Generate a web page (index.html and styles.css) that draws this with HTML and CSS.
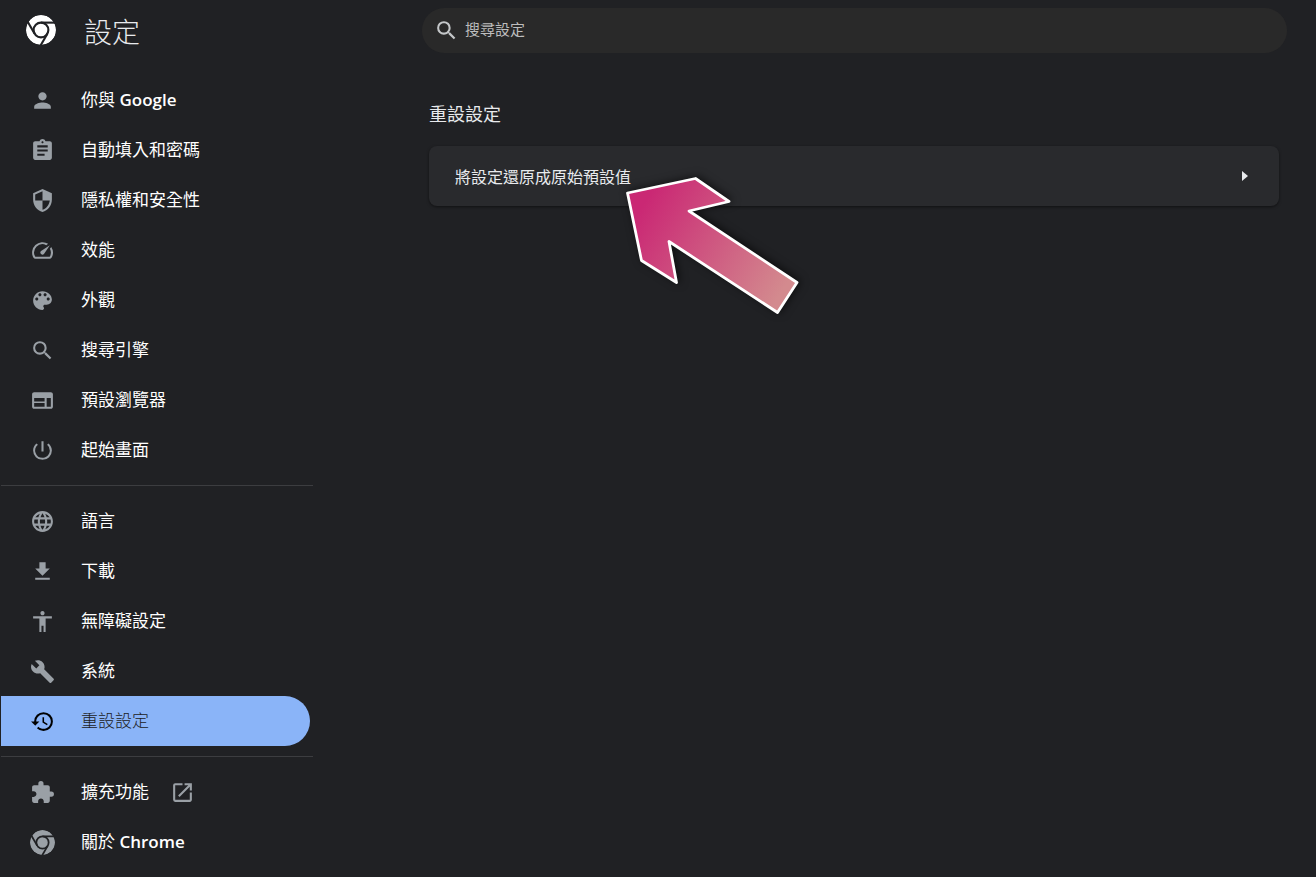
FILE: index.html
```
<!DOCTYPE html>
<html lang="zh-Hant">
<head>
  <meta charset="UTF-8">
  <meta name="viewport" content="width=device-width, initial-scale=1">
  <title>設定</title>
  <link rel="stylesheet" href="styles.css">
</head>
<body>
  <svg class="sprite" aria-hidden="true">
    <symbol id="chrome" viewBox="0 0 24 24">
      <mask id="chrome-cut">
        <circle cx="12" cy="12" r="12" fill="#fff"/>
        <g fill="none" stroke="#000" stroke-width="1.7">
          <circle cx="12" cy="12" r="5.9"/>
          <path d="M12 6.1H24"/>
          <path d="M12 6.1H24" transform="rotate(120 12 12)"/>
          <path d="M12 6.1H24" transform="rotate(240 12 12)"/>
        </g>
      </mask>
      <circle cx="12" cy="12" r="12" fill="currentColor" mask="url(#chrome-cut)"/>
    </symbol>
    <symbol id="search" viewBox="0 0 24 24">
      <path d="M15.5 14h-.79l-.28-.27A6.471 6.471 0 0 0 16 9.5 6.5 6.5 0 1 0 9.5 16c1.61 0 3.09-.59 4.23-1.57l.27.28v.79l5 4.99L20.49 19l-4.99-5zm-6 0C7.01 14 5 11.99 5 9.5S7.01 5 9.5 5 14 7.01 14 9.5 11.99 14 9.5 14z"/>
    </symbol>
  </svg>

  <aside class="sidebar">
    <header class="brand">
      <svg class="logo"><use href="#chrome"/></svg>
      <h1>設定</h1>
    </header>
    <nav>
      <div class="menu">
        <a href="#people">
          <svg class="icon" viewBox="0 0 24 24"><path d="M12 12c2.21 0 4-1.79 4-4s-1.79-4-4-4-4 1.79-4 4 1.79 4 4 4zm0 2c-2.67 0-8 1.34-8 4v2h16v-2c0-2.66-5.33-4-8-4z"/></svg>
          <span>你與 <b>Google</b></span>
        </a>
        <a href="#autofill">
          <svg class="icon" viewBox="0 0 24 24"><path d="M19 3h-4.18C14.4 1.84 13.3 1 12 1c-1.3 0-2.4.84-2.82 2H5c-1.1 0-2 .9-2 2v14c0 1.1.9 2 2 2h14c1.1 0 2-.9 2-2V5c0-1.1-.9-2-2-2zm-7 0c.55 0 1 .45 1 1s-.45 1-1 1-1-.45-1-1 .45-1 1-1zm2 14H7v-2h7v2zm3-4H7v-2h10v2zm0-4H7V7h10v2z"/></svg>
          <span>自動填入和密碼</span>
        </a>
        <a href="#privacy">
          <svg class="icon" viewBox="0 0 24 24"><path d="M12 1L3 5v6c0 5.55 3.84 10.74 9 12 5.16-1.26 9-6.45 9-12V5l-9-4zm0 10.99h7c-.53 4.12-3.28 7.79-7 8.94V12H5V6.3l7-3.11v8.8z"/></svg>
          <span>隱私權和安全性</span>
        </a>
        <a href="#performance">
          <svg class="icon" viewBox="0 0 24 24"><path d="M20.38 8.57l-1.23 1.85a8 8 0 0 1-.22 7.58H5.07A8 8 0 0 1 15.58 6.85l1.85-1.23A10 10 0 0 0 3.35 19a2 2 0 0 0 1.72 1h13.85a2 2 0 0 0 1.74-1 10 10 0 0 0-.27-10.44zm-9.79 6.84a2 2 0 0 0 2.83 0l5.66-8.49-8.49 5.66a2 2 0 0 0 0 2.83z"/></svg>
          <span>效能</span>
        </a>
        <a href="#appearance">
          <svg class="icon" viewBox="0 0 24 24"><path d="M12 3c-4.97 0-9 4.03-9 9s4.03 9 9 9c.83 0 1.5-.67 1.5-1.5 0-.39-.15-.74-.39-1.01-.23-.26-.38-.61-.38-.99 0-.83.67-1.5 1.5-1.5H16c2.76 0 5-2.24 5-5 0-4.42-4.03-8-9-8zm-5.5 9c-.83 0-1.5-.67-1.5-1.5S5.67 9 6.5 9 8 9.67 8 10.5 7.33 12 6.5 12zm3-4C8.67 8 8 7.33 8 6.5S8.67 5 9.5 5s1.5.67 1.5 1.5S10.33 8 9.5 8zm5 0c-.83 0-1.5-.67-1.5-1.5S13.67 5 14.5 5s1.5.67 1.5 1.5S15.33 8 14.5 8zm3 4c-.83 0-1.5-.67-1.5-1.5S16.67 9 17.5 9s1.5.67 1.5 1.5-.67 1.5-1.5 1.5z"/></svg>
          <span>外觀</span>
        </a>
        <a href="#engine">
          <svg class="icon"><use href="#search"/></svg>
          <span>搜尋引擎</span>
        </a>
        <a href="#default-browser">
          <svg class="icon" viewBox="0 0 24 24"><path d="M20 4H4c-1.1 0-1.99.9-1.99 2L2 18c0 1.1.9 2 2 2h16c1.1 0 2-.9 2-2V6c0-1.1-.9-2-2-2zm-6 14H4v-3.500h10v3.500zm0-5H4V9.500h10V13zm6 5h-4V9.500h4V18z"/></svg>
          <span>預設瀏覽器</span>
        </a>
        <a href="#startup">
          <svg class="icon" viewBox="0 0 24 24"><path d="M13 3h-2v10h2V3zm4.83 2.17l-1.42 1.42A6.92 6.92 0 0 1 19 12c0 3.87-3.13 7-7 7A6.995 6.995 0 0 1 7.58 6.58L6.17 5.17A8.932 8.932 0 0 0 3 12a9 9 0 0 0 18 0c0-2.74-1.23-5.18-3.17-6.83z"/></svg>
          <span>起始畫面</span>
        </a>
      </div>
      <div class="menu">
        <a href="#languages">
          <svg class="icon" viewBox="0 0 24 24"><path d="M11.99 2C6.47 2 2 6.48 2 12s4.47 10 9.99 10C17.52 22 22 17.52 22 12S17.52 2 11.99 2zm6.93 6h-2.95a15.65 15.65 0 0 0-1.38-3.56A8.03 8.03 0 0 1 18.92 8zM12 4.04c.83 1.2 1.48 2.53 1.91 3.96h-3.82c.43-1.43 1.08-2.76 1.91-3.96zM4.26 14C4.1 13.36 4 12.69 4 12s.1-1.36.26-2h3.38c-.08.66-.14 1.32-.14 2s.06 1.34.14 2H4.26zm.82 2h2.95c.32 1.25.78 2.45 1.38 3.56A7.987 7.987 0 0 1 5.08 16zm2.95-8H5.08a7.987 7.987 0 0 1 4.33-3.56A15.65 15.65 0 0 0 8.03 8zM12 19.96c-.83-1.2-1.48-2.53-1.91-3.96h3.82c-.43 1.43-1.08 2.76-1.91 3.96zM14.34 14H9.66c-.09-.66-.16-1.32-.16-2s.07-1.35.16-2h4.68c.09.65.16 1.32.16 2s-.07 1.34-.16 2zm.25 5.56c.6-1.11 1.06-2.31 1.38-3.56h2.95a8.03 8.03 0 0 1-4.33 3.56zM16.36 14c.08-.66.14-1.32.14-2s-.06-1.34-.14-2h3.38c.16.64.26 1.31.26 2s-.1 1.36-.26 2h-3.38z"/></svg>
          <span>語言</span>
        </a>
        <a href="#downloads">
          <svg class="icon" viewBox="0 0 24 24"><path d="M19 9h-4V3H9v6H5l7 7 7-7zM5 18v2h14v-2H5z"/></svg>
          <span>下載</span>
        </a>
        <a href="#accessibility">
          <svg class="icon" viewBox="0 0 24 24"><path d="M12 2c1.1 0 2 .9 2 2s-.9 2-2 2-2-.9-2-2 .9-2 2-2zm9 7h-6v13h-2v-6h-2v6H9V9H3V7h18v2z"/></svg>
          <span>無障礙設定</span>
        </a>
        <a href="#system">
          <svg class="icon" viewBox="0 0 24 24"><path d="M22.7 19l-9.1-9.1c.9-2.3.4-5-1.5-6.9-2-2-5-2.4-7.4-1.3L9 6 6 9 1.6 4.7C.4 7.1.9 10.1 2.9 12.1c1.9 1.9 4.6 2.4 6.9 1.5l9.1 9.1c.4.4 1 .4 1.4 0l2.3-2.3c.5-.4.5-1.1.1-1.4z"/></svg>
          <span>系統</span>
        </a>
        <a class="selected" href="#reset" aria-current="page">
          <svg class="icon" viewBox="0 0 24 24"><path d="M13 3a9 9 0 0 0-9 9H1l3.89 3.89.07.14L9 12H6c0-3.87 3.13-7 7-7s7 3.13 7 7-3.13 7-7 7c-1.93 0-3.68-.79-4.94-2.06l-1.42 1.42A8.954 8.954 0 0 0 13 21a9 9 0 0 0 0-18zm-1 5v5l4.28 2.54.72-1.21-3.5-2.08V8H12z"/></svg>
          <span>重設設定</span>
        </a>
      </div>
      <div class="menu">
        <a href="#extensions">
          <svg class="icon" viewBox="0 0 24 24"><path d="M20.5 11H19V7c0-1.1-.9-2-2-2h-4V3.5a2.5 2.5 0 0 0-5 0V5H4c-1.1 0-1.99.9-1.99 2v3.8H3.5c1.49 0 2.7 1.21 2.7 2.7s-1.21 2.7-2.7 2.7H2V20c0 1.1.9 2 2 2h3.8v-1.5c0-1.49 1.21-2.7 2.7-2.7s2.7 1.21 2.7 2.7V22H17c1.1 0 2-.9 2-2v-4h1.5a2.5 2.5 0 0 0 0-5z"/></svg>
          <span>擴充功能</span>
          <svg class="icon launch" viewBox="0 0 24 24"><path d="M19 19H5V5h7V3H5a2 2 0 0 0-2 2v14a2 2 0 0 0 2 2h14c1.1 0 2-.9 2-2v-7h-2v7zM14 3v2h3.59l-9.83 9.83 1.41 1.41L19 6.41V10h2V3h-7z"/></svg>
        </a>
        <a href="#about">
          <svg class="icon"><use href="#chrome"/></svg>
          <span>關於 <b>Chrome</b></span>
        </a>
      </div>
    </nav>
  </aside>

  <main>
    <label class="search">
      <svg class="search-icon"><use href="#search"/></svg>
      <input type="search" placeholder="搜尋設定" aria-label="搜尋設定">
    </label>
    <section id="reset">
      <h2>重設設定</h2>
      <button class="card" type="button">
        <span>將設定還原成原始預設值</span>
        <svg class="caret" viewBox="0 0 6 10"><path d="M0 0l6 5-6 5z"/></svg>
      </button>
    </section>
  </main>

  <svg class="pointer" viewBox="0 0 190 155" aria-hidden="true">
    <defs>
      <linearGradient id="pink" gradientUnits="userSpaceOnUse" x1="20" y1="40" x2="160" y2="125">
        <stop offset="0" stop-color="#ca2874"/>
        <stop offset="1" stop-color="#d38a8e"/>
      </linearGradient>
    </defs>
    <path d="M7.500 23L75.500 8.500L109 31.500L69 41L177 112.500L157.500 142.500L49 71.500L56.500 112.500L21.500 90.500Z" fill="url(#pink)" stroke="#fff" stroke-width="2.800" stroke-linejoin="round"/>
  </svg>
</body>
</html>
```
FILE: styles.css
```
* {
  box-sizing: border-box;
  margin: 0;
  padding: 0;
}
body {
  display: flex;
  min-height: 100vh;
  font-family: "Open Sans", "Noto Sans CJK TC", sans-serif;
  font-size: 17px;
  background-color: #202124;
  color: #fff;
}
svg {
  flex: none;
  fill: currentColor;
}
.sprite {
  position: absolute;
  width: 0;
  height: 0;
}

/* sidebar */
.sidebar {
  flex: 0 0 314px;
  padding: 0 1px;
}
.brand {
  display: flex;
  align-items: center;
  gap: 28px;
  height: 60px;
  padding-left: 25px;
}
.logo {
  width: 30px;
  height: 30px;
}
h1 {
  padding-top: 2px;
  font-size: 28px;
  font-weight: 300;
  color: #e8eaed;
}
nav {
  padding-top: 5px;
}
.menu {
  padding: 10px 0;
}
.menu + .menu {
  border-top: 1px solid #3c3d40;
}
.menu a {
  display: flex;
  align-items: center;
  gap: 26px;
  height: 50px;
  margin-right: 3px;
  padding-left: 29px;
  border-radius: 0 25px 25px 0;
  color: #fff;
  text-decoration: none;
}
.menu span {
  padding-bottom: 3px;
}
.menu b {
  font-weight: 600;
}
.menu a.selected {
  background-color: #8ab4f8;
  color: #202124;
  font-weight: 300;
}
.icon {
  width: 25px;
  height: 25px;
  color: #9aa0a6;
}
.selected .icon {
  color: #000;
}
.launch {
  margin-left: -5px;
}

/* content */
main {
  flex: 1;
  min-width: 0;
  padding: 8px 29px 0 108px;
}
.search {
  display: flex;
  align-items: center;
  gap: 6px;
  height: 45px;
  padding: 0 12px;
  border-radius: 23px;
  background-color: #292929;
}
.search-icon {
  width: 25px;
  height: 25px;
  color: #c4c7c9;
}
.search input {
  flex: 1;
  min-width: 0;
  padding-bottom: 3px;
  border: none;
  outline: none;
  background: none;
  font: inherit;
  font-size: 15px;
  color: #e8eaed;
}
.search input::placeholder {
  color: #bdbdbd;
}
section {
  padding: 47px 8px 0 7px;
}
h2 {
  margin-bottom: 18px;
  font-size: 18px;
  font-weight: 400;
  line-height: 28px;
  color: #e8eaed;
}
.card {
  display: flex;
  align-items: center;
  justify-content: space-between;
  width: 100%;
  height: 60px;
  padding: 0 31px 0 26px;
  border: none;
  border-radius: 8px;
  background-color: #292a2d;
  box-shadow: 0 1px 3px rgba(0, 0, 0, 0.5);
  font: inherit;
  font-size: 16px;
  color: #e8eaed;
}
.caret {
  width: 6px;
  height: 10px;
}

/* arrow laid over the card */
.pointer {
  position: absolute;
  top: 170px;
  left: 620px;
  width: 190px;
  height: 155px;
  filter: drop-shadow(2px -1px 4px rgba(0, 0, 0, 0.6));
  pointer-events: none;
}
```
